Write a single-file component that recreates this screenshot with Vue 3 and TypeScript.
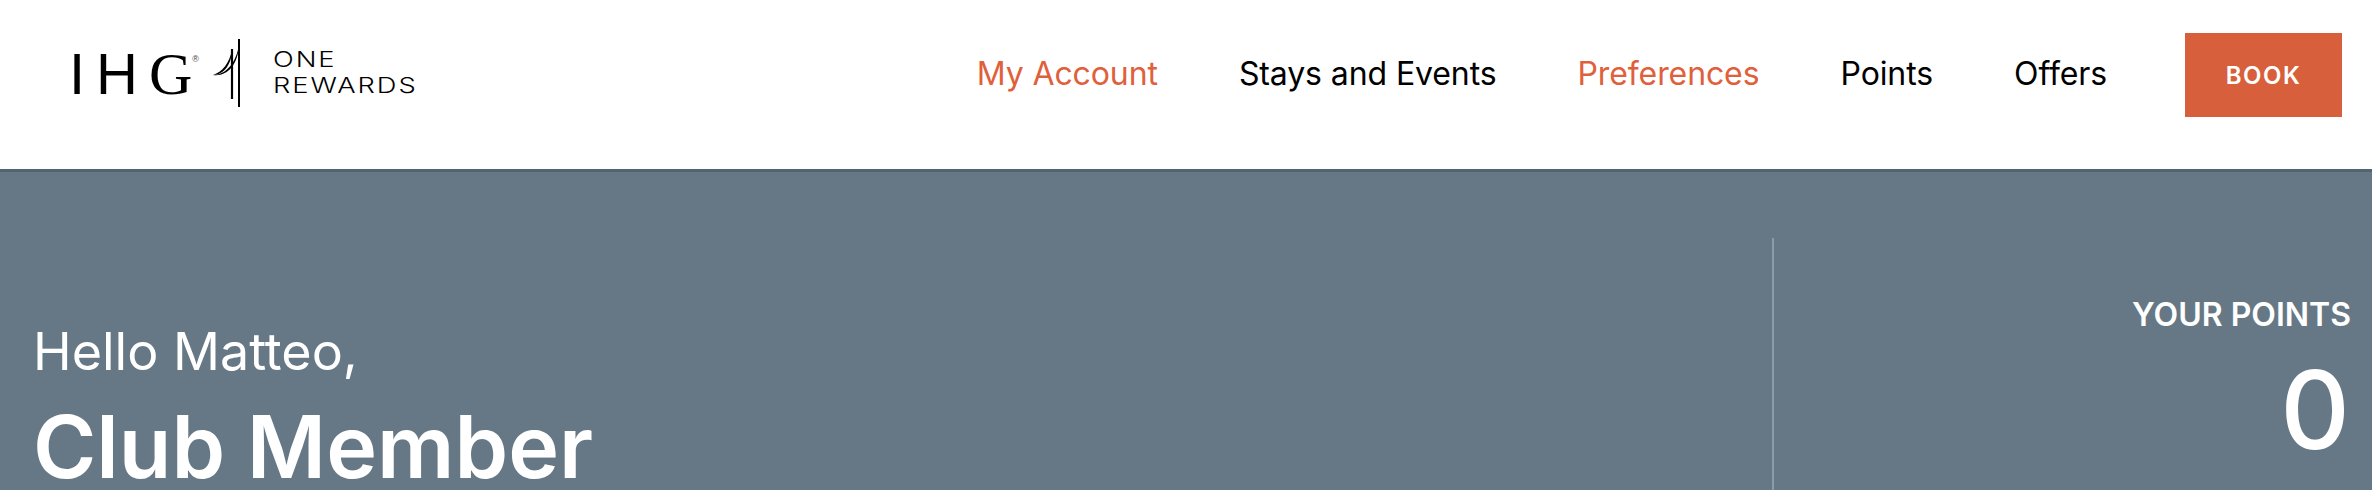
<script setup lang="ts">
interface NavItem {
  label: string
  active?: boolean
}

const navItems: NavItem[] = [
  { label: 'My Account', active: true },
  { label: 'Stays and Events' },
  { label: 'Preferences', active: true },
  { label: 'Points' },
  { label: 'Offers' },
]
</script>

<template>
  <div class="page">
    <header class="header">
      <a class="logo" href="#">
        <span class="logo-ihg">IH<span class="logo-g">G</span><sup class="logo-reg">®</sup></span>
        <svg class="logo-mark" width="34" height="70" viewBox="0 0 34 70" fill="none">
          <path d="M27 0v68" stroke="#000" stroke-width="2" />
          <path d="M20 10v50" stroke="#000" stroke-width="2.2" />
          <path d="M1 36C10 33 18 24 20 10C20 25 12 36 1 36Z" fill="#000" />
          <path d="M1 36C14 36 24 24 27 6C26 26 15 38 1 36Z" fill="#000" />
        </svg>
        <span class="logo-rewards">
          <span>ONE</span>
          <span>REWARDS</span>
        </span>
      </a>
      <nav class="nav">
        <a v-for="item in navItems" :key="item.label" class="nav-link" :class="{ active: item.active }" href="#">
          {{ item.label }}
        </a>
        <a class="book" href="#">BOOK</a>
      </nav>
    </header>

    <section class="hero">
      <div class="member">
        <p class="hello">Hello Matteo,</p>
        <h1 class="level">Club Member</h1>
      </div>
      <div class="points">
        <p class="points-label">YOUR POINTS</p>
        <p class="points-value">0</p>
      </div>
    </section>
  </div>
</template>

<style>
html,
body {
  margin: 0;
  overflow: hidden;
}
</style>

<style scoped>
.page {
  width: 2372px;
  height: 490px;
  overflow: hidden;
  font-family: Inter, "Liberation Sans", sans-serif;
  background: #667885;
}
p,
h1 {
  margin: 0;
}
a {
  text-decoration: none;
}
.header {
  box-sizing: border-box;
  height: 172px;
  background: #fff;
  border-bottom: 3px solid #53656f;
  display: flex;
  justify-content: space-between;
  align-items: flex-start;
  padding: 33px 30px 0 69px;
}
.logo {
  display: flex;
  align-items: flex-start;
  color: #000;
}
.logo-ihg {
  font-family: "Liberation Sans", sans-serif;
  font-size: 58px;
  line-height: 58px;
  letter-spacing: 11px;
  margin-top: 12px;
  display: flex;
  width: 144px;
  white-space: nowrap;
}
.logo-g {
  font-family: "Liberation Serif", serif;
  letter-spacing: 0;
  font-size: 60px;
}
.logo-reg {
  font-size: 9px;
  line-height: 12px;
  letter-spacing: 0;
  margin: 8px 0 0;
  color: #444;
}
.logo-mark {
  flex: none;
  margin: 6px 0 0 -1px;
}
.logo-rewards {
  display: flex;
  flex-direction: column;
  margin: 14px 0 0 27px;
  font-weight: 300;
  font-size: 21px;
  line-height: 26px;
  letter-spacing: 1.5px;
  transform: scaleX(1.3);
  transform-origin: left top;
}
.nav {
  display: flex;
  align-items: flex-start;
}
.nav-link {
  font-size: 32px;
  line-height: 40px;
  letter-spacing: -0.1px;
  margin-top: 21px;
  margin-right: 81px;
  color: #000;
  white-space: nowrap;
}
.nav-link.active {
  color: #e0603c;
}
.nav-link:nth-of-type(5) {
  margin-right: 78px;
}
.book {
  width: 157px;
  height: 84px;
  background: #d85f3b;
  color: #fff;
  font-size: 24px;
  font-weight: 600;
  letter-spacing: 1.5px;
  display: flex;
  align-items: center;
  justify-content: center;
}
.hero {
  box-sizing: border-box;
  height: 318px;
  display: flex;
  color: #fff;
  padding: 66px 21px 0 33px;
}
.member {
  flex: 1;
  padding-top: 84px;
}
.hello {
  font-size: 52px;
  line-height: 60px;
}
.level {
  font-size: 86px;
  font-weight: 600;
  line-height: 84px;
  margin-top: 23px;
}
.points {
  width: 577px;
  border-left: 2px solid #8d9ba6;
  text-align: right;
  padding-top: 57px;
}
.points-label {
  font-size: 32px;
  font-weight: 600;
  line-height: 40px;
}
.points-value {
  font-size: 108px;
  font-weight: 500;
  line-height: 110px;
  margin: 20px 1px 0 0;
}
</style>
